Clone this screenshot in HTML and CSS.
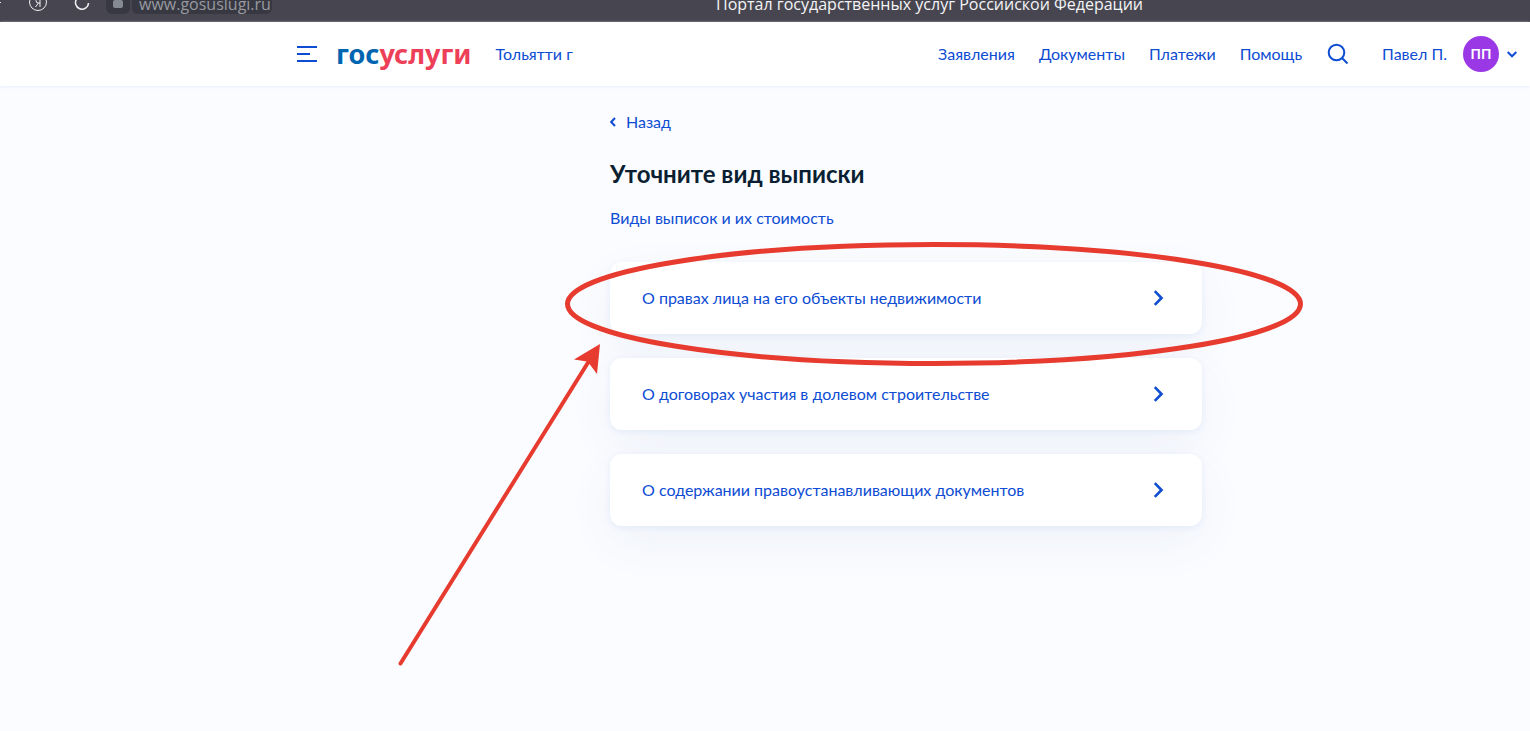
FILE: index.html
```html
<!DOCTYPE html>
<html lang="ru">
<head>
<meta charset="utf-8">
<title>Портал государственных услуг Российской Федерации</title>
<link rel="stylesheet" href="styles.css">
</head>
<body>
<div class="browser">
  <svg class="browser-back" width="4" height="22" viewBox="0 0 4 22" aria-hidden="true"><path d="M0 2.500h1"/></svg>
  <svg class="browser-icon browser-ya" width="20" height="22" viewBox="0 0 20 22" aria-hidden="true"><circle cx="10" cy="2" r="8.500"/><path d="M12 -3v10M12 3h-1.500a2.500 2.500 0 0 1 0-5H12M10.500 3L7.500 7"/></svg>
  <svg class="browser-icon browser-reload" width="16" height="22" viewBox="0 0 16 22" aria-hidden="true"><path d="M3 -1.500A6.500 6.500 0 1 0 14.500 3"/></svg>
  <span class="lock"><svg width="10" height="8" viewBox="0 0 10 8" aria-hidden="true"><rect width="10" height="8" rx="2"/></svg></span>
  <span class="address">www.gosuslugi.ru</span>
  <span class="window-title">Портал государственных услуг Российской Федерации</span>
</div>
<header class="header">
  <button class="menu" aria-label="Меню"><svg width="20" height="16" viewBox="0 0 20 16"><path d="M0 1h20M0 8h13M0 15h20"/></svg></button>
  <a class="logo" href="#"><span class="logo-blue">гос</span><span class="logo-red">услуги</span></a>
  <a class="city" href="#">Тольятти г</a>
  <nav class="nav">
    <a href="#">Заявления</a>
    <a href="#">Документы</a>
    <a href="#">Платежи</a>
    <a href="#">Помощь</a>
  </nav>
  <button class="search" aria-label="Поиск"><svg width="22" height="22" viewBox="0 0 22 22"><circle cx="9.500" cy="9.500" r="7.800"/><path d="M15 15l5.500 5.500"/></svg></button>
  <button class="user"><span>Павел П.</span><span class="avatar">ПП</span><svg width="10" height="7" viewBox="0 0 10 7" aria-hidden="true"><path d="M.7 1L5 5.300 9.300 1"/></svg></button>
</header>
<main class="main">
  <div class="content">
    <a class="back" href="#"><svg width="6" height="10" viewBox="0 0 6 10" aria-hidden="true"><path d="M5 1L1.200 5 5 9"/></svg>Назад</a>
    <h1>Уточните вид выписки</h1>
    <a class="info" href="#">Виды выписок и их стоимость</a>
    <div class="options">
      <button class="option"><span>О правах лица на его объекты недвижимости</span><svg width="11" height="16" viewBox="0 0 11 16" aria-hidden="true"><path d="M1.800 1.200L8.500 8l-6.700 6.800"/></svg></button>
      <button class="option"><span>О договорах участия в долевом строительстве</span><svg width="11" height="16" viewBox="0 0 11 16" aria-hidden="true"><path d="M1.800 1.200L8.500 8l-6.700 6.800"/></svg></button>
      <button class="option"><span>О содержании правоустанавливающих документов</span><svg width="11" height="16" viewBox="0 0 11 16" aria-hidden="true"><path d="M1.800 1.200L8.500 8l-6.700 6.800"/></svg></button>
    </div>
  </div>
</main>
<svg class="marks" width="1530" height="731" viewBox="0 0 1530 731" aria-hidden="true">
  <ellipse cx="934" cy="304" rx="366.500" ry="59.500"/>
  <path class="shaft" d="M400.500 663.500L589 361"/>
  <path class="head" d="M600 344L574 359.500 587 361.500 589.500 364 597 374z"/>
</svg>
</body>
</html>
```
FILE: styles.css
```css
* { box-sizing: border-box; }
body {
  margin: 0;
  min-height: 100vh;
  background: #fbfcff;
  color: #0b1f33;
  font: 16px/24px Lato, "Open Sans", sans-serif;
}
a { color: inherit; text-decoration: none; }
button {
  border: 0;
  padding: 0;
  background: none;
  color: inherit;
  font: inherit;
  cursor: pointer;
}
svg { display: block; flex: none; fill: none; }

.browser {
  display: flex;
  align-items: flex-end;
  height: 22px;
  overflow: hidden;
  background: #474650;
  font: 16px/24px "Open Sans", "Noto Sans", sans-serif;
}
.browser-back { stroke: #e8e8ea; }
.browser-icon { stroke: #f0f0f2; stroke-width: 1.5; }
.browser-ya { margin-left: 24px; stroke-width: 1; }
.browser-reload { margin-left: 26px; }
.lock, .address {
  height: 24px;
  margin-bottom: 8px;
  background: #373841;
  border-radius: 6px;
}
.lock {
  display: flex;
  align-items: flex-end;
  justify-content: center;
  width: 24px;
  margin-left: 16px;
  padding-bottom: 6px;
}
.lock svg { fill: #868a92; }
.address {
  width: 140px;
  margin-left: 2px;
  padding-left: 7px;
  color: #989aa0;
  line-height: 28px;
}
.window-title {
  margin: 0 0 6px 444px;
  color: #f4f4f6;
  white-space: nowrap;
}

.header {
  display: flex;
  align-items: center;
  height: 64px;
  padding: 0 13px 0 297px;
  background: #fff;
  color: #0d4cd3;
  box-shadow: 0 1px 3px #e9effb;
}
.header svg, .back svg, .option svg { stroke: currentColor; stroke-width: 2; }
.logo {
  margin-left: 19px;
  font: 700 27px/32px "Noto Sans", sans-serif;
}
.logo-blue { color: #0065b1; }
.logo-red { color: #ee3f58; }
.city { margin-left: 24px; }
.nav { display: flex; gap: 24px; margin-left: auto; }
.search { margin-left: 25px; }
.user { display: flex; align-items: center; margin-left: 33px; }
.avatar {
  width: 36px;
  height: 36px;
  margin: 0 8px 0 16px;
  border-radius: 50%;
  background: #9b38e6;
  color: #fff;
  font-size: 14px;
  font-weight: 700;
  line-height: 36px;
  text-align: center;
}

.main { padding: 24px 0 24px 282px; }
.content { max-width: 592px; margin: 0 auto; }
.back, .info { color: #0d4cd3; }
.back { display: flex; align-items: center; gap: 10px; }
h1 {
  margin: 24px 0 16px;
  font-size: 24px;
  font-weight: 700;
  line-height: 32px;
}
.info { display: block; }
.options { display: grid; gap: 24px; margin-top: 32px; }
.option {
  display: flex;
  align-items: center;
  justify-content: space-between;
  padding: 24px 38px 24px 32px;
  border-radius: 12px;
  background: #fff;
  color: #0d4cd3;
  text-align: left;
  box-shadow: 0 2px 6px rgba(30, 90, 200, .07), 0 16px 48px rgba(30, 80, 160, .06);
}
.option svg { stroke-width: 2.6; }

.marks { position: absolute; top: 0; left: 0; pointer-events: none; }
.marks ellipse { stroke: #e63b2e; stroke-width: 5; }
.marks .shaft { stroke: #e63b2e; stroke-width: 4; stroke-linecap: round; }
.marks .head { fill: #e63b2e; }
```
